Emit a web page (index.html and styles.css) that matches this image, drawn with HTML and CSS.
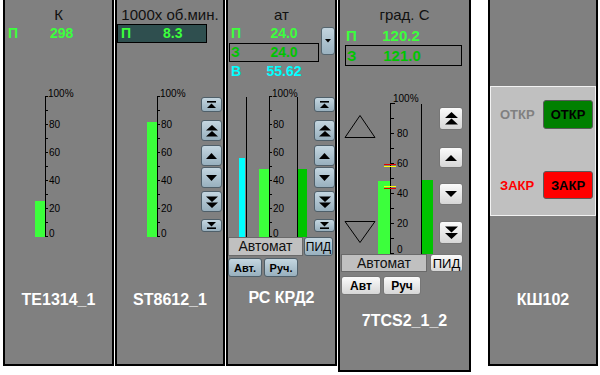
FILE: index.html
```html
<!DOCTYPE html>
<html>
<head>
<meta charset="utf-8">
<link rel="stylesheet" href="styles.css">
<title>Мнемосхема</title>
</head>
<body>
<div class="board">

  <!-- TE1314_1 -->
  <div class="panel p1">
    <div class="unit">К</div>
    <div class="reading">
      <span class="tag">П</span><span class="val">298</span>
    </div>
    <div class="gauge">
      <svg class="scale" width="107" height="154" viewBox="0 0 107 154">
        <rect class="fill-green" x="30" y="113" width="10" height="36"/>
        <path class="axis" d="M40.5 8.5V148.5M40 8.5h3M40 22.5h3M40 36.5h3M40 50.5h3M40 64.5h3M40 78.5h3M40 92.5h3M40 106.5h3M40 120.5h3M40 134.5h3M40 148.5h3"/>
        <text x="43" y="8.5">100%</text>
        <text x="44" y="40">80</text>
        <text x="44" y="68">60</text>
        <text x="44" y="96">40</text>
        <text x="44" y="124">20</text>
        <text x="44" y="148.5">0</text>
      </svg>
    </div>
    <div class="name">TE1314_1</div>
  </div>

  <!-- ST8612_1 -->
  <div class="panel p2">
    <div class="unit">1000x об.мин.</div>
    <div class="readout">
      <div class="reading">
        <span class="tag">П</span><span class="val">8.3</span>
      </div>
    </div>
    <div class="gauge">
      <svg class="scale" width="84" height="154" viewBox="0 0 84 154">
        <rect class="fill-green" x="30" y="34" width="10" height="115"/>
        <path class="axis" d="M40.5 8.5V148.5M40 8.5h3M40 22.5h3M40 36.5h3M40 50.5h3M40 64.5h3M40 78.5h3M40 92.5h3M40 106.5h3M40 120.5h3M40 134.5h3M40 148.5h3"/>
        <text x="43" y="8.5">100%</text>
        <text x="44" y="40">80</text>
        <text x="44" y="68">60</text>
        <text x="44" y="96">40</text>
        <text x="44" y="124">20</text>
        <text x="44" y="148.5">0</text>
      </svg>
      <div class="steps">
        <button class="step stop"><svg width="11" height="7" viewBox="0 0 11 7"><rect x="1" y="0" width="9" height="1.6"/><path d="M5.5 2.5L10 7H1z"/></svg></button>
        <button class="step s-dbl"><svg width="12" height="12" viewBox="0 0 12 12"><path d="M6 0L12 5.5H0zM6 6L12 11.5H0z"/></svg></button>
        <button class="step s-up"><svg width="11" height="6" viewBox="0 0 11 6"><path d="M5.5 0L11 6H0z"/></svg></button>
        <button class="step s-down"><svg width="11" height="6" viewBox="0 0 11 6"><path d="M0 0H11L5.5 6z"/></svg></button>
        <button class="step s-dbl2"><svg width="12" height="12" viewBox="0 0 12 12"><path d="M0 0.5H12L6 6zM0 6.5H12L6 12z"/></svg></button>
        <button class="step stop bottom"><svg width="11" height="7" viewBox="0 0 11 7"><path d="M1 0H10L5.5 4.5z"/><rect x="1" y="5.4" width="9" height="1.6"/></svg></button>
      </div>
    </div>
    <div class="name">ST8612_1</div>
  </div>

  <!-- РС КРД2 -->
  <div class="panel p3">
    <div class="unit">ат</div>
    <div class="head">
      <div class="rows">
        <div class="reading">
          <span class="tag">П</span><span class="val">24.0</span>
        </div>
        <div class="setpoint">
          <div class="reading">
            <span class="tag">З</span><span class="val">24.0</span>
          </div>
        </div>
        <div class="reading cyan">
          <span class="tag">В</span><span class="val">55.62</span>
        </div>
      </div>
      <button class="drop"><svg width="6" height="4" viewBox="0 0 6 4"><path d="M0 0H6L3 3.5z"/></svg></button>
    </div>
    <div class="gauge">
      <svg class="scale" width="86" height="149" viewBox="0 0 86 149">
        <rect class="fill-cyan" x="11" y="70" width="6" height="79"/>
        <rect class="fill-green" x="31" y="81" width="10" height="68"/>
        <rect class="fill-dark" x="70" y="81" width="9" height="68"/>
        <path class="axis" d="M18.5 8.5V148.5M69.5 8.5V148.5"/>
        <path class="axis" d="M41.5 8.5V148.5M41 8.5h3M41 22.5h3M41 36.5h3M41 50.5h3M41 64.5h3M41 78.5h3M41 92.5h3M41 106.5h3M41 120.5h3M41 134.5h3M41 148.5h3"/>
        <text x="44" y="8.5">100%</text>
        <text x="45" y="40">80</text>
        <text x="45" y="68">60</text>
        <text x="45" y="96">40</text>
        <text x="45" y="124">20</text>
        <text x="45" y="148.5">0</text>
      </svg>
      <div class="steps">
        <button class="step stop"><svg width="11" height="7" viewBox="0 0 11 7"><rect x="1" y="0" width="9" height="1.6"/><path d="M5.5 2.5L10 7H1z"/></svg></button>
        <button class="step s-dbl"><svg width="12" height="12" viewBox="0 0 12 12"><path d="M6 0L12 5.5H0zM6 6L12 11.5H0z"/></svg></button>
        <button class="step s-up"><svg width="11" height="6" viewBox="0 0 11 6"><path d="M5.5 0L11 6H0z"/></svg></button>
        <button class="step s-down"><svg width="11" height="6" viewBox="0 0 11 6"><path d="M0 0H11L5.5 6z"/></svg></button>
        <button class="step s-dbl2"><svg width="12" height="12" viewBox="0 0 12 12"><path d="M0 0.5H12L6 6zM0 6.5H12L6 12z"/></svg></button>
        <button class="step stop bottom"><svg width="11" height="7" viewBox="0 0 11 7"><path d="M1 0H10L5.5 4.5z"/><rect x="1" y="5.4" width="9" height="1.6"/></svg></button>
      </div>
    </div>
    <div class="mode">
      <div class="mode-name">Автомат</div>
      <button class="pid">ПИД</button>
    </div>
    <div class="mode-btns">
      <button class="mbtn">Авт.</button>
      <button class="mbtn">Руч.</button>
    </div>
    <div class="name">РС КРД2</div>
  </div>

  <!-- 7TCS2_1_2 -->
  <div class="panel p4">
    <div class="unit">град. С</div>
    <div class="reading">
      <span class="tag">П</span><span class="val">120.2</span>
    </div>
    <div class="setpoint">
      <div class="reading">
        <span class="tag">З</span><span class="val">121.0</span>
      </div>
    </div>
    <div class="gauge">
      <svg class="scale" width="99" height="164" viewBox="0 0 99 164">
        <path class="tri" d="M20 25.5L35 47.5H5z"/>
        <path class="tri" d="M5 131.5H35L20 152.5z"/>
        <rect class="fill-green" x="38" y="91" width="12" height="73"/>
        <rect class="fill-dark" x="82" y="90" width="11" height="74"/>
        <path class="axis" d="M50.5 13.5V163.5M50 13.5h5M50 28.5h4M50 43.5h4M50 58.5h4M50 73.5h4M50 88.5h4M50 103.5h4M50 118.5h4M50 133.5h4M50 148.5h4M50 163.5h4M81.5 13.5V163.5"/>
        <path class="mark-red" d="M44 74.5H56M44 98.5H56"/>
        <path class="mark-yellow" d="M44 76.5H56M44 96.5H56"/>
        <text x="53" y="12">100%</text>
        <text x="57" y="47">80</text>
        <text x="57" y="77">60</text>
        <text x="57" y="107">40</text>
        <text x="57" y="137">20</text>
        <text x="57" y="162.5">0</text>
      </svg>
      <div class="steps">
        <button class="gstep g1"><svg width="13" height="13" viewBox="0 0 13 13"><path d="M6.5 0L13 6H0zM6.5 6.5L13 12.5H0z"/></svg></button>
        <button class="gstep g2"><svg width="12" height="6" viewBox="0 0 12 6"><path d="M6 0L12 6H0z"/></svg></button>
        <button class="gstep g3"><svg width="12" height="6" viewBox="0 0 12 6"><path d="M0 0H12L6 6z"/></svg></button>
        <button class="gstep g4"><svg width="13" height="13" viewBox="0 0 13 13"><path d="M0 0.5H13L6.5 6.5zM0 7H13L6.5 13z"/></svg></button>
      </div>
    </div>
    <div class="mode">
      <div class="mode-name">Автомат</div>
      <button class="pid">ПИД</button>
    </div>
    <div class="mode-btns">
      <button class="mbtn">Авт</button>
      <button class="mbtn">Руч</button>
    </div>
    <div class="name">7TCS2_1_2</div>
  </div>

  <!-- КШ102 -->
  <div class="panel p5">
    <div class="valve">
      <div class="vrow open">
        <span class="vstate">ОТКР</span>
        <button class="vbtn">ОТКР</button>
      </div>
      <div class="vrow close">
        <span class="vstate">ЗАКР</span>
        <button class="vbtn">ЗАКР</button>
      </div>
    </div>
    <div class="name">КШ102</div>
  </div>

</div>
</body>
</html>
```

FILE: styles.css
```css
* {
    box-sizing: border-box;
}

body {
    margin: 0;
    background: #ffffff;
    font-family: "Liberation Sans", Arial, sans-serif;
}

button {
    font-family: "Liberation Sans", Arial, sans-serif;
    padding: 0;
    margin: 0;
    color: #000;
}

.board {
    display: flex;
    align-items: flex-start;
    gap: 1px;
    padding-left: 3px;
}

.panel {
    display: flex;
    flex-direction: column;
    height: 366px;
    background: #808080;
    border: 2px solid #000;
    border-top: 0;
}

.p1 { width: 111px; }
.p2 { width: 110px; }
.p3 { width: 111px; }
.p4 { width: 133px; height: 372px; }
.p5 { width: 110px; margin-left: 16px; }

.unit {
    height: 24px;
    padding-top: 6px;
    line-height: 18px;
    font-size: 15px;
    text-align: center;
    color: #111;
    white-space: nowrap;
}

.name {
    line-height: 20px;
    font-size: 16px;
    font-weight: bold;
    text-align: center;
    color: #fff;
}

/* readings */
.reading {
    display: flex;
    height: 16px;
    line-height: 16px;
    font-size: 14px;
    font-weight: bold;
    color: #3cff3c;
    white-space: nowrap;
}

.reading .tag {
    width: 42px;
}

.p1 .reading {
    margin-top: 1px;
    padding-left: 3px;
}

.readout {
    width: 90px;
    height: 19px;
    border: 1px solid #000;
    background: #2f4f4f;
}

.readout .reading {
    padding-left: 3px;
    line-height: 17px;
}

.head {
    display: flex;
    margin-top: 1px;
}

.rows {
    width: 93px;
}

.p3 .reading {
    padding-left: 3px;
}

.p3 .reading .tag {
    width: 23px;
}

.p3 .reading .val {
    width: 60px;
    text-align: center;
}

.setpoint {
    border: 1px solid #000;
}

.setpoint .reading {
    color: #00c400;
}

.p3 .setpoint {
    width: 90px;
    height: 19px;
    margin: 2px 0 1px 1px;
}

.p3 .setpoint .reading {
    padding-left: 1px;
    line-height: 17px;
}

.reading.cyan {
    color: #00ffff;
}

.drop {
    width: 14px;
    height: 28px;
    margin-top: 2px;
    border: 1px solid #56666f;
    border-radius: 3px;
    background: linear-gradient(#c2d4de, #9ab2c0);
}

.drop svg {
    display: block;
    margin: auto;
}

.p4 .reading {
    height: 18px;
    line-height: 18px;
    margin-top: 3px;
    padding-left: 6px;
    font-size: 15px;
}

.p4 .reading .tag {
    width: 25px;
}

.p4 .reading .val {
    width: 60px;
    text-align: center;
}

.p4 .setpoint {
    width: 117px;
    height: 21px;
    margin-left: 5px;
}

.p4 .setpoint .reading {
    margin-top: 0;
    padding-left: 1px;
    line-height: 19px;
}

/* gauges */
.gauge {
    display: flex;
    align-items: flex-start;
}

.p1 .gauge { margin-top: 47px; }
.p2 .gauge { margin-top: 45px; }
.p3 .gauge { margin-top: 9px; }
.p4 .gauge { margin-top: 24px; }

.scale {
    display: block;
    flex: none;
    overflow: visible;
}

.scale text {
    font-family: "Liberation Sans", Arial, sans-serif;
    font-size: 10px;
    fill: #000;
}

.axis {
    fill: none;
    stroke: #000;
    stroke-width: 1;
    shape-rendering: crispEdges;
}

.tri {
    fill: none;
    stroke: #000;
    stroke-width: 1;
}

.mark-red {
    stroke: #e00000;
    stroke-width: 1;
    shape-rendering: crispEdges;
}

.mark-yellow {
    stroke: #ffff00;
    stroke-width: 1;
    shape-rendering: crispEdges;
}

.fill-green { fill: #3cff3c; }
.fill-cyan { fill: #00ffff; }
.fill-dark { fill: #00c400; }

.steps {
    display: flex;
    flex-direction: column;
}

.p2 .steps,
.p3 .steps {
    margin-top: 9px;
    width: 21px;
}

.step {
    display: flex;
    align-items: center;
    justify-content: center;
    width: 21px;
    height: 21px;
    border: 1px solid #4f5f69;
    border-radius: 3px;
    background: linear-gradient(#c4d6e0, #98b0be);
}

.step svg {
    fill: #000;
}

.step.stop { height: 15px; }
.step.stop.bottom { height: 13px; margin-top: 7px; }
.step.s-dbl { margin-top: 8px; }
.step.s-up { margin-top: 4px; }
.step.s-down { margin-top: 1px; }
.step.s-dbl2 { margin-top: 3px; }

.p4 .steps {
    width: 24px;
}

.gstep {
    display: flex;
    align-items: center;
    justify-content: center;
    width: 24px;
    height: 22px;
    border: 1px solid #777;
    border-radius: 3px;
    background: linear-gradient(#fbfbfb, #d6d6d6);
}

.gstep svg {
    fill: #000;
}

.gstep.g1 { margin-top: 17px; height: 23px; }
.gstep.g2 { margin-top: 17px; height: 21px; }
.gstep.g3 { margin-top: 15px; }
.gstep.g4 { margin-top: 16px; height: 23px; }

/* mode switch */
.mode {
    display: flex;
    height: 19px;
}

.mode-name {
    width: 75px;
    border: 1px solid #6a6a6a;
    background: #c0c0c0;
    font-size: 14px;
    line-height: 17px;
    text-align: center;
    color: #111;
}

.pid {
    width: 29px;
    margin-left: 1px;
    border: 1px solid #4f5f69;
    border-radius: 3px;
    background: linear-gradient(#c4d6e0, #98b0be);
    font-size: 12px;
}

.mode-btns {
    display: flex;
    gap: 2px;
    margin-top: 2px;
}

.mbtn {
    width: 34px;
    height: 19px;
    border: 1px solid #4f5f69;
    border-radius: 3px;
    background: linear-gradient(#c4d6e0, #98b0be);
    font-size: 11px;
    font-weight: bold;
}

.p3 .name { margin-top: 11px; }

.p4 .mode {
    height: 18px;
    margin-left: 1px;
}

.p4 .mode-name {
    width: 86px;
    line-height: 16px;
}

.p4 .pid {
    width: 33px;
    margin-left: 3px;
    border-color: #777;
    background: linear-gradient(#fbfbfb, #d6d6d6);
    font-size: 13px;
}

.p4 .mode-btns {
    margin-top: 4px;
    margin-left: 1px;
}

.p4 .mbtn {
    width: 40px;
    border-color: #777;
    background: linear-gradient(#fbfbfb, #d6d6d6);
    font-size: 12px;
}

.p4 .mbtn + .mbtn {
    width: 38px;
}

.p4 .name { margin-top: 16px; }

.p1 .name,
.p2 .name { margin-top: 48px; }

/* valve */
.valve {
    height: 130px;
    margin-top: 86px;
    border: 1px solid #f2f2f2;
    background: #c0c0c0;
}

.vrow {
    display: flex;
    align-items: center;
    padding-left: 9px;
}

.vstate {
    width: 43px;
    font-size: 13px;
    font-weight: bold;
}

.vbtn {
    width: 50px;
    border: 1px solid #5a5a5a;
    border-radius: 3px;
    font-size: 13px;
    font-weight: bold;
}

.open {
    margin-top: 13px;
}

.open .vstate { color: #808080; }
.open .vbtn { height: 29px; background: #008000; }

.close {
    margin-top: 42px;
}

.close .vstate { color: #ff0000; }
.close .vbtn { height: 28px; background: #ff0000; }

.p5 .name { margin-top: 74px; }
```
